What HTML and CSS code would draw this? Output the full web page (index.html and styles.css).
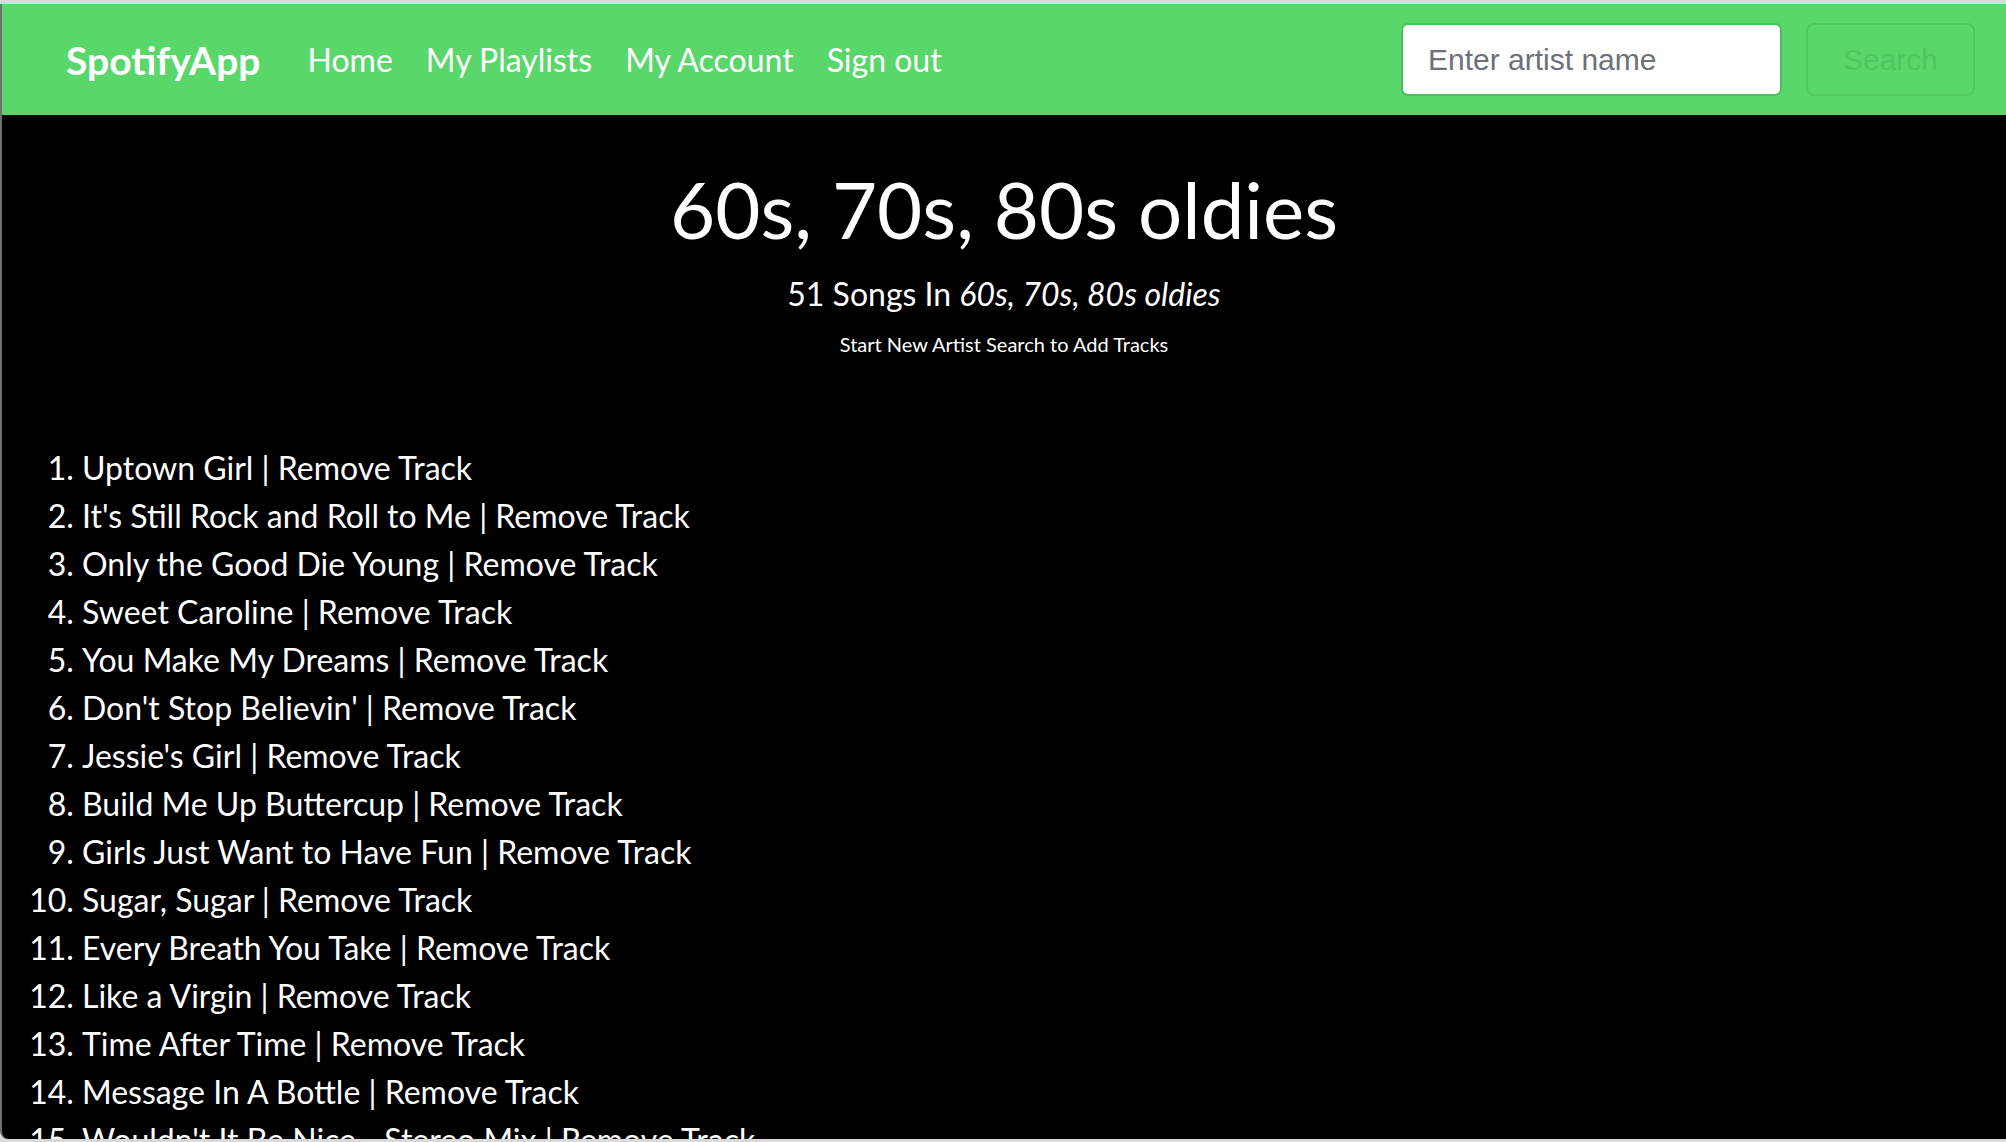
FILE: index.html
```html
<!DOCTYPE html>
<html lang="en">
<head>
<meta charset="utf-8">
<title>SpotifyApp</title>
<link rel="stylesheet" href="styles.css">
</head>
<body>
<div class="window">
  <nav class="navbar">
    <a class="brand" href="#">SpotifyApp</a>
    <ul class="nav-links">
      <li><a href="#">Home</a></li>
      <li><a href="#">My Playlists</a></li>
      <li><a href="#">My Account</a></li>
      <li><a href="#">Sign out</a></li>
    </ul>
    <form class="search">
      <input class="search-input" type="text" placeholder="Enter artist name">
      <button class="search-btn" type="button">Search</button>
    </form>
  </nav>
  <main class="content">
    <header class="playlist-header">
      <h1 class="title">60s, 70s, 80s oldies</h1>
      <p class="subtitle">51 Songs In <em>60s, 70s, 80s oldies</em></p>
      <p class="hint">Start New Artist Search to Add Tracks</p>
    </header>
    <ol class="tracks">
      <li>Uptown Girl | Remove Track</li>
      <li>It's Still Rock and Roll to Me | Remove Track</li>
      <li>Only the Good Die Young | Remove Track</li>
      <li>Sweet Caroline | Remove Track</li>
      <li>You Make My Dreams | Remove Track</li>
      <li>Don't Stop Believin' | Remove Track</li>
      <li>Jessie's Girl | Remove Track</li>
      <li>Build Me Up Buttercup | Remove Track</li>
      <li>Girls Just Want to Have Fun | Remove Track</li>
      <li>Sugar, Sugar | Remove Track</li>
      <li>Every Breath You Take | Remove Track</li>
      <li>Like a Virgin | Remove Track</li>
      <li>Time After Time | Remove Track</li>
      <li>Message In A Bottle | Remove Track</li>
      <li>Wouldn't It Be Nice - Stereo Mix | Remove Track</li>
    </ol>
  </main>
</div>
</body>
</html>
```

FILE: styles.css
```css
html, body {
  margin: 0;
  padding: 0;
}

body {
  background: #d9d9d9;
  height: 1142px;
  overflow: hidden;
  font-family: Lato, "Open Sans", sans-serif;
}

.window {
  margin-top: 4px;
  border-left: 2px solid #707070;
  height: 1135px;
  overflow: hidden;
  background: #000;
  border-bottom-left-radius: 8px;
  color: #fff;
}

.navbar {
  height: 111px;
  background: #5ad76b;
  display: flex;
  align-items: center;
  padding: 0 31px 0 64px;
  box-sizing: border-box;
}

.brand {
  color: #fff;
  text-decoration: none;
  font-size: 39px;
  font-weight: 700;
  margin-right: 47px;
}

.nav-links {
  list-style: none;
  margin: 0;
  padding: 0;
  display: flex;
  gap: 33px;
  flex: 1;
}

.nav-links a {
  color: #fff;
  text-decoration: none;
  font-size: 32px;
}

.search {
  display: flex;
  gap: 24px;
  margin: 0;
}

.search-input {
  width: 381px;
  height: 73px;
  box-sizing: border-box;
  border: 2px solid #4cc15c;
  border-radius: 7px;
  background: #fff;
  padding: 0 0 0 25px;
  font-family: "Liberation Sans", Arial, sans-serif;
  font-size: 30px;
  color: #555;
  outline: none;
}

.search-input::placeholder {
  color: #6c7078;
}

.search-btn {
  width: 169px;
  height: 73px;
  box-sizing: border-box;
  border: 2px solid #52c661;
  border-radius: 8px;
  background: transparent;
  color: #4fc45f;
  font-family: "Liberation Sans", Arial, sans-serif;
  font-size: 30px;
  padding: 0;
}

.playlist-header {
  text-align: center;
  padding-top: 52px;
}

.title {
  margin: 0;
  font-size: 78px;
  font-weight: 400;
  line-height: 1.1;
}

.subtitle {
  margin: 22px 0 0;
  font-size: 32px;
  line-height: 1.2;
}

.subtitle em {
  font-style: italic;
}

.hint {
  margin: 19px 0 0;
  font-size: 20px;
  line-height: 1.2;
}

.tracks {
  margin: 88px 0 0;
  padding-left: 80px;
  font-size: 32px;
  line-height: 48px;
}
```
